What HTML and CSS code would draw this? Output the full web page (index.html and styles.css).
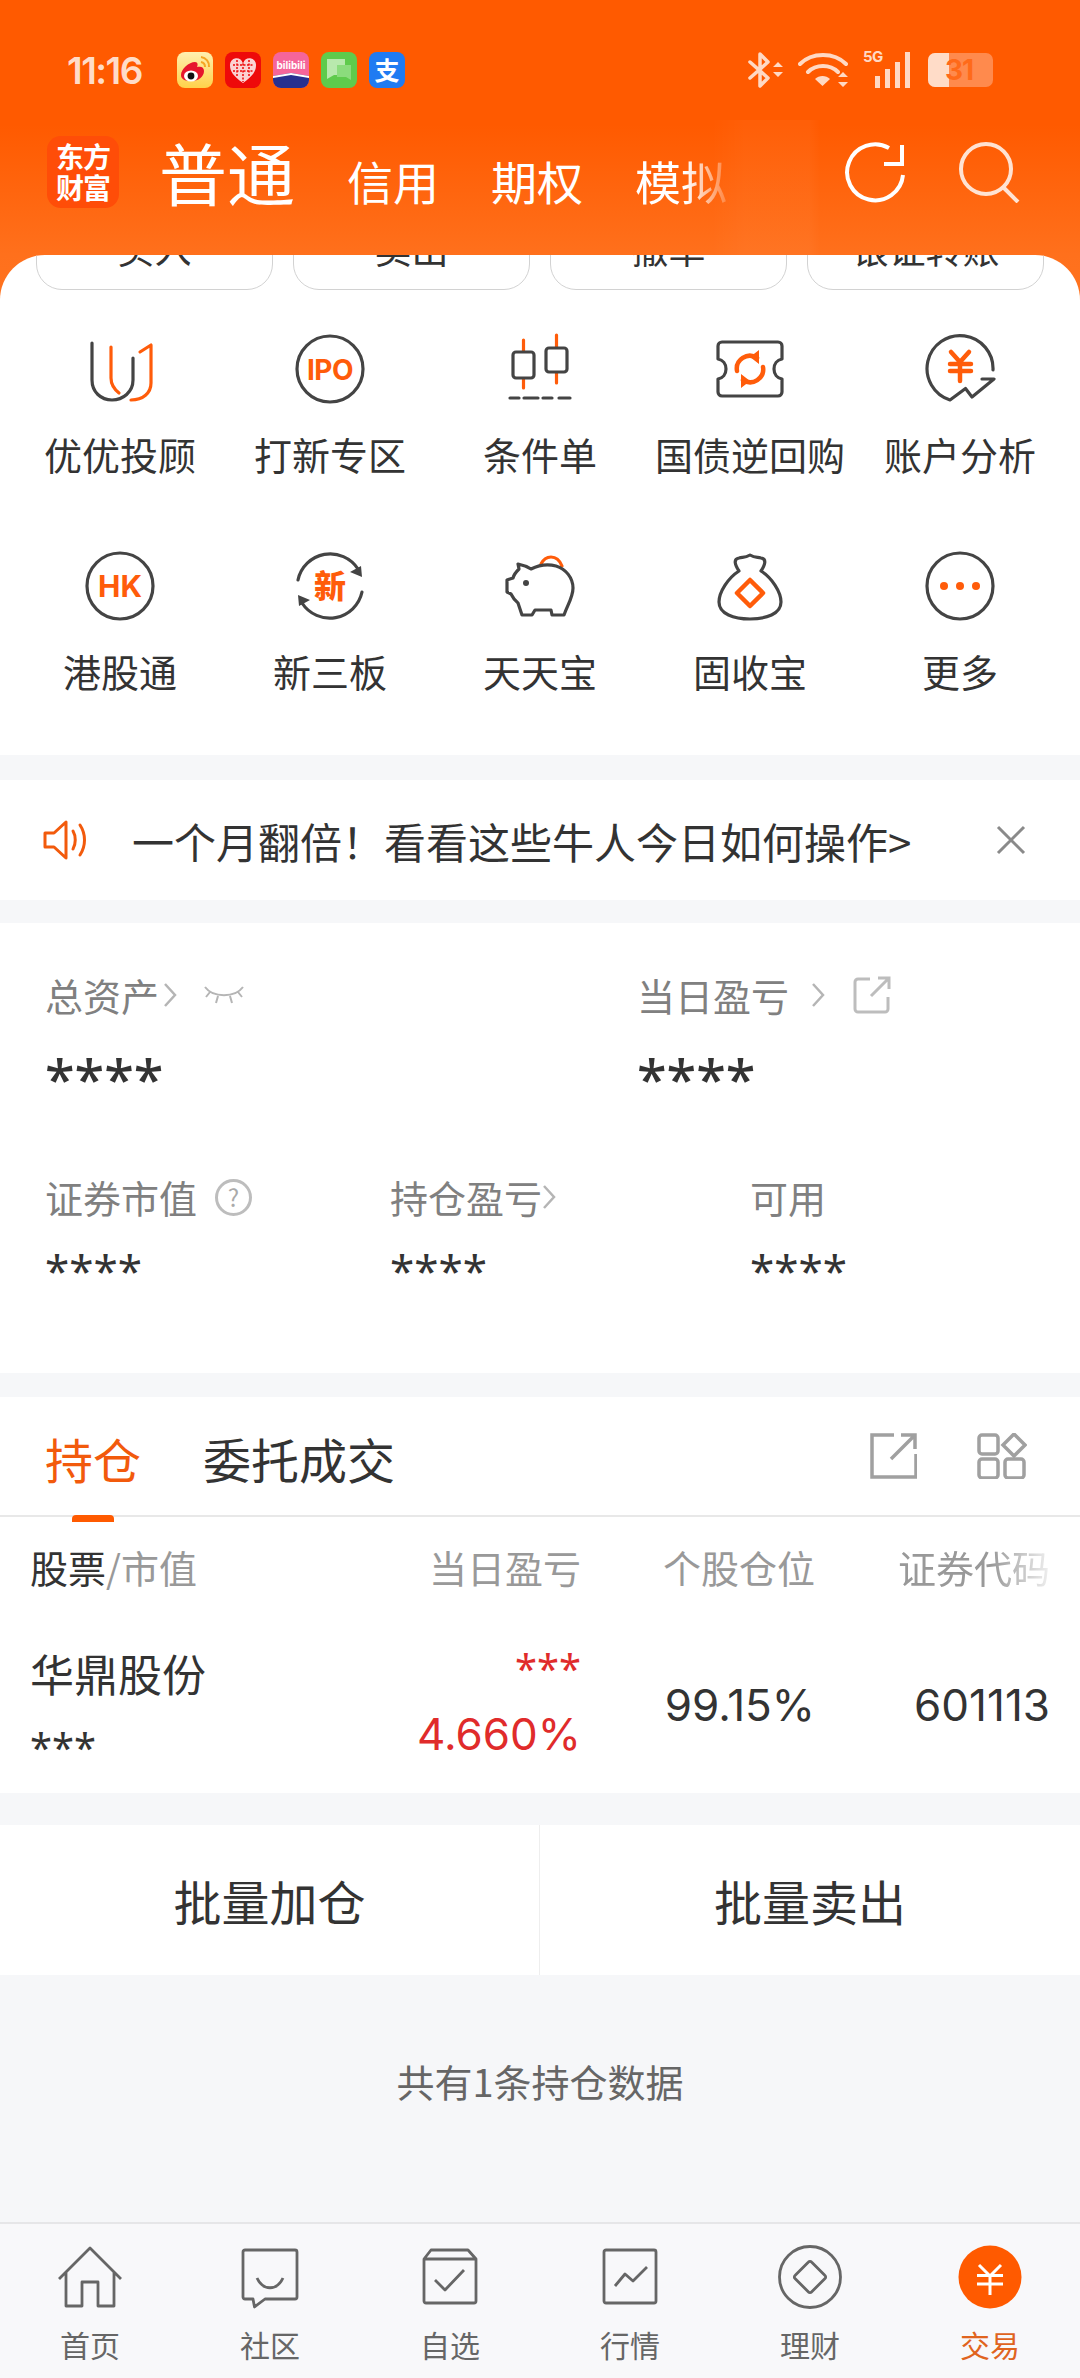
FILE: index.html
```html
<!DOCTYPE html>
<html lang="zh-CN">
<head>
<meta charset="utf-8">
<title>交易</title>
<link rel="stylesheet" href="styles.css">
</head>
<body>
<div class="screen">
  <header class="top">
    <div class="ghost"></div>
    <div class="status">
      <span class="clock">11:16</span>
      <div class="apps">
        <svg class="app" viewBox="0 0 36 36"><defs><linearGradient id="wb" x1="0" y1="0" x2="0" y2="1"><stop offset="0" stop-color="#fff0b0"/><stop offset="1" stop-color="#ffd24a"/></linearGradient></defs><rect width="36" height="36" rx="8" fill="url(#wb)"/><path d="M4 23c0-6 8-13 14-13 3 0 3 3 2 5 4-1 7 0 7 4 0 6-6 10-12 10S4 28 4 23z" fill="#e6162d"/><ellipse cx="14" cy="24" rx="7" ry="5.5" fill="#fff"/><circle cx="14" cy="24" r="3.4" fill="#111"/><path d="M24 5a9 9 0 0 1 8 10M24 10a5 5 0 0 1 4 5" fill="none" stroke="#f5a623" stroke-width="2"/></svg>
        <svg class="app" viewBox="0 0 36 36"><rect width="36" height="36" rx="8" fill="#ee0a0a"/><path d="M18 31C8 24 5 19 5 13.500a6.500 6.500 0 0 1 13-1.500 6.500 6.500 0 0 1 13 1.500C31 19 28 24 18 31z" fill="#fbd3d3"/><path d="M18 8v22M8 13h20M8 19h20M12 8v17M24 8v17" stroke="#ee0a0a" stroke-width="1.500" stroke-dasharray="2 1.500"/></svg>
        <svg class="app" viewBox="0 0 36 36"><rect width="36" height="36" rx="8" fill="#f5659a"/><path d="M0 24l18-3 18 3v4a8 8 0 0 1-8 8H8a8 8 0 0 1-8-8z" fill="#27308f"/><path d="M0 24l18-3 18 3v2L18 23 0 26z" fill="#fff"/><text class="app-bili" x="18" y="17" text-anchor="middle">bilibili</text></svg>
        <svg class="app" viewBox="0 0 36 36"><rect width="36" height="36" rx="8" fill="#5fcb4c"/><path d="M6 7h18v16H13l-7 4z" fill="#b8e9ad"/><path d="M16 13h14v15l-5-3h-9z" fill="#8bdc7c"/></svg>
        <svg class="app" viewBox="0 0 36 36"><rect width="36" height="36" rx="8" fill="#1f7bf2"/><text class="app-ali" x="18" y="28" text-anchor="middle">支</text></svg>
      </div>
      <div class="sys">
        <svg class="sys-bt" viewBox="0 0 36 38"><path d="M3 11l18 16-8 8V3l8 8L3 27" fill="none" stroke="#ffd9c4" stroke-width="3.500" stroke-linejoin="round" stroke-linecap="round"/><path d="M31 11l5 5H26zM31 26l5-5H26z" fill="#ffd9c4"/></svg>
        <svg class="sys-wifi" viewBox="0 0 50 36"><path d="M2 12C14 0 36 0 48 12M10 20c8-8 22-8 30 0" fill="none" stroke="#ffd9c4" stroke-width="4" stroke-linecap="round"/><path d="M17 27c4-4 11-4 15 0l-7.500 7z" fill="#ffd9c4"/><path d="M45 20l5 5H40zM45 35l5-5H40z" fill="#ffd9c4"/></svg>
        <div class="sys-signal">
          <span class="sys-5g">5G</span>
          <svg viewBox="0 0 37 36"><path d="M2 24h5v12H2zM12 17h5v19h-5zM22 10h5v26h-5zM32 0h5v36h-5z" fill="#ffd9c4"/></svg>
        </div>
        <div class="battery">
          <span class="battery-fill"></span>
          <span class="battery-num">31</span>
        </div>
      </div>
    </div>
    <nav class="acct">
      <div class="brand"><span>东方</span><span>财富</span></div>
      <span class="acct-main">普通</span>
      <span class="acct-tab">信用</span>
      <span class="acct-tab">期权</span>
      <span class="acct-tab acct-tab-fade">模拟</span>
      <div class="acct-tools">
        <svg class="tool" viewBox="0 0 62 62"><path d="M59 34A28 28 0 1 1 45 7" fill="none" stroke="#fff" stroke-width="4"/><path d="M58 4v19H40" fill="none" stroke="#fff" stroke-width="4"/></svg>
        <svg class="tool tool-soft" viewBox="0 0 62 62"><circle cx="28" cy="28" r="25" fill="none" stroke="#fff" stroke-width="4"/><path d="M46 47l14 14" stroke="#fff" stroke-width="4"/></svg>
      </div>
    </nav>
  </header>

  <section class="panel">
    <div class="quick">
      <span class="quick-btn">买入</span>
      <span class="quick-btn">卖出</span>
      <span class="quick-btn">撤单</span>
      <span class="quick-btn">银证转账</span>
    </div>
    <div class="tools">
      <a class="tool-cell">
        <svg viewBox="0 0 72 72"><path class="ln" d="M8 10v37c0 12 9 20 20 20s21-8 21-20V25"/><path class="or" d="M27 14v31c0 6 3 11 8 15M56 19l11-7v38c0 10-8 17-20 17"/></svg>
        <span>优优投顾</span>
      </a>
      <a class="tool-cell">
        <svg viewBox="0 0 72 72"><circle class="ln" cx="36" cy="36" r="33"/><text class="glyph glyph-ipo" x="36" y="47" text-anchor="middle">IPO</text></svg>
        <span>打新专区</span>
      </a>
      <a class="tool-cell">
        <svg viewBox="0 0 72 72"><path class="or" d="M19.500 7v48M52.500 2v48"/><rect class="ln fill" x="9" y="19" width="21" height="26" rx="3"/><rect class="ln fill" x="42" y="15" width="21" height="24" rx="3"/><path class="ln" d="M6 65h9M20 65h14M39 65h9M55 65h11"/></svg>
        <span>条件单</span>
      </a>
      <a class="tool-cell">
        <svg viewBox="0 0 72 72"><path class="ln" d="M8 9h56a4 4 0 0 1 4 4v13c-5 1-8 5-8 10s3 9 8 10v13a4 4 0 0 1-4 4H8a4 4 0 0 1-4-4V46c5-1 8-5 8-10s-3-9-8-10V13a4 4 0 0 1 4-4z"/><path class="or-b" d="M23 38a13 13 0 0 1 20-13M49 34a13 13 0 0 1-20 13"/><path class="or-f" d="M45 17v14l-9-7zM27 55V41l9 7z"/></svg>
        <span>国债逆回购</span>
      </a>
      <a class="tool-cell">
        <svg viewBox="0 0 72 72"><path class="ln" d="M69 37A33 33 0 1 0 26 67L41.500 55.500 48 64 70 46H58"/><path class="or-b" d="M27 19l9 10 9-10M26 31h21M26 38h21M36 29v19"/></svg>
        <span>账户分析</span>
      </a>
      <a class="tool-cell">
        <svg viewBox="0 0 72 72"><circle class="ln" cx="36" cy="36" r="33"/><text class="glyph glyph-hk" x="36" y="47" text-anchor="middle">HK</text></svg>
        <span>港股通</span>
      </a>
      <a class="tool-cell">
        <svg viewBox="0 0 72 72"><path class="ln" d="M4 30A33 33 0 0 1 64 19M68 42A33 33 0 0 1 8 53"/><path class="ln-f" d="M68 27l-12-5 11-6zM4 45l12 5-11 6z"/><text class="glyph glyph-xin" x="36" y="48" text-anchor="middle">新</text></svg>
        <span>新三板</span>
      </a>
      <a class="tool-cell">
        <svg viewBox="0 0 72 72"><path class="or" d="M37 14c2-4 6-7 10-7 5 0 9 4 11 9"/><path class="ln" d="M14 14c5 1 10 3 13 5 8-4 17-5 25-3 10 3 17 12 17 22 0 9-5 16-9 27H48l-1-5H31l-3 5H18l-4-12c-4-3-6-7-7-9l-4-2V30l6-2c1-4 4-7 6-9z"/><circle class="ln-f" cx="22" cy="33" r="3"/></svg>
        <span>天天宝</span>
      </a>
      <a class="tool-cell">
        <svg viewBox="0 0 72 72"><path class="ln" d="M25 21c-4-6-6-12 0-13 4-1 6 0 11-3 5 3 7 2 11 3 6 1 4 7 0 13 11 7 20 21 20 31 0 12-15 17-31 17S5 64 5 52c0-10 9-24 20-31z"/><path class="or-b" d="M36 30l13 13-13 13-13-13z"/></svg>
        <span>固收宝</span>
      </a>
      <a class="tool-cell">
        <svg viewBox="0 0 72 72"><circle class="ln" cx="36" cy="36" r="33"/><circle class="or-f" cx="20" cy="36" r="4"/><circle class="or-f" cx="36" cy="36" r="4"/><circle class="or-f" cx="52" cy="36" r="4"/></svg>
        <span>更多</span>
      </a>
    </div>
  </section>

  <section class="notice">
    <svg class="notice-icon" viewBox="0 0 46 42"><path d="M2 14h9L23 3v36L11 28H2z" fill="none" stroke="#f25a0c" stroke-width="3" stroke-linejoin="round"/><path d="M30 12c3 5 3 13 0 18M37 6c6 9 6 21 0 30" fill="none" stroke="#f25a0c" stroke-width="3" stroke-linecap="round"/></svg>
    <span class="notice-text">一个月翻倍！看看这些牛人今日如何操作&gt;</span>
    <svg class="notice-close" viewBox="0 0 32 32"><path d="M3 3l26 26M29 3L3 29" stroke="#8a8a8a" stroke-width="3"/></svg>
  </section>

  <section class="assets">
    <div class="assets-top">
      <div class="stat">
        <div class="stat-label">总资产
          <svg class="chev" viewBox="0 0 14 26"><path d="M2 2l10 11L2 24"/></svg>
          <svg class="eye" viewBox="0 0 40 22"><path d="M1 3c8 11 30 11 38 0M6 8L2 13M14 12l-2 7M26 12l2 7M34 8l4 5"/></svg>
        </div>
        <div class="stat-big">****</div>
      </div>
      <div class="stat">
        <div class="stat-label">当日盈亏
          <svg class="chev chev-wide" viewBox="0 0 14 26"><path d="M2 2l10 11L2 24"/></svg>
          <svg class="share-sm" viewBox="0 0 38 38"><path d="M17 3H5a3 3 0 0 0-3 3v27a3 3 0 0 0 3 3h27a3 3 0 0 0 3-3V21M18 20L36 2M25 2h11v11"/></svg>
        </div>
        <div class="stat-big">****</div>
      </div>
    </div>
    <div class="assets-bottom">
      <div class="stat">
        <div class="stat-label">证券市值
          <span class="hint">?</span>
        </div>
        <div class="stat-small">****</div>
      </div>
      <div class="stat">
        <div class="stat-label">持仓盈亏
          <svg class="chev chev-tight" viewBox="0 0 14 26"><path d="M2 2l10 11L2 24"/></svg>
        </div>
        <div class="stat-small">****</div>
      </div>
      <div class="stat">
        <div class="stat-label">可用</div>
        <div class="stat-small">****</div>
      </div>
    </div>
  </section>

  <section class="hold">
    <div class="hold-tabs">
      <span class="hold-tab hold-tab-on">持仓</span>
      <span class="hold-tab">委托成交</span>
      <div class="hold-tools">
        <svg class="hold-share" viewBox="0 0 47 46"><path d="M24 2H2v42h44V21M21 26L45 2M31 2h14v14"/></svg>
        <svg class="hold-grid" viewBox="0 0 50 46"><rect x="2" y="2" width="19" height="19" rx="3"/><path d="M37 1l11 11-11 11-11-11z"/><rect x="2" y="26" width="19" height="19" rx="3"/><rect x="28" y="26" width="19" height="19" rx="3"/></svg>
      </div>
    </div>
    <div class="table-head">
      <span><b>股票</b>/市值</span>
      <span class="num">当日盈亏</span>
      <span class="num">个股仓位</span>
      <span class="num cut">证券代码</span>
    </div>
    <div class="table-row">
      <div class="cell-name">
        <span class="name">华鼎股份</span>
        <span class="stars">***</span>
      </div>
      <div class="cell-pl">
        <span class="stars stars-up">***</span>
        <span class="pct">4.660%</span>
      </div>
      <span class="cell-val">99.15%</span>
      <span class="cell-val">601113</span>
    </div>
  </section>

  <section class="batch">
    <span class="batch-btn">批量加仓</span>
    <span class="batch-btn">批量卖出</span>
  </section>

  <p class="count">共有1条持仓数据</p>

  <nav class="tabbar">
    <a class="tabbar-item">
      <svg viewBox="0 0 64 64"><path d="M1 34L32 3l31 31M8 27v34h16V37h16v24h16V27"/></svg>
      <span>首页</span>
    </a>
    <a class="tabbar-item">
      <svg viewBox="0 0 64 64"><path d="M7 5h50a2 2 0 0 1 2 2v45a2 2 0 0 1-2 2H27L16.500 62 15 54H7a2 2 0 0 1-2-2V7a2 2 0 0 1 2-2zM19 33c6 13 20 13 26 0"/></svg>
      <span>社区</span>
    </a>
    <a class="tabbar-item">
      <svg viewBox="0 0 64 64"><path d="M6 14l7-9h37l8 9v42a2 2 0 0 1-2 2H8a2 2 0 0 1-2-2zM6 14h52M17 35l10 10 19-20"/></svg>
      <span>自选</span>
    </a>
    <a class="tabbar-item">
      <svg viewBox="0 0 64 64"><path d="M8 5h48a2 2 0 0 1 2 2v49a2 2 0 0 1-2 2H8a2 2 0 0 1-2-2V7a2 2 0 0 1 2-2zM17 41l10-12 8 7 14-14"/></svg>
      <span>行情</span>
    </a>
    <a class="tabbar-item">
      <svg viewBox="0 0 64 64"><circle cx="32" cy="32" r="30.500"/><path d="M30.500 17a2 2 0 0 1 3 0l13.500 13.500a2 2 0 0 1 0 3L33.500 47a2 2 0 0 1-3 0L17 33.500a2 2 0 0 1 0-3z"/></svg>
      <span>理财</span>
    </a>
    <a class="tabbar-item tabbar-on">
      <svg viewBox="0 0 64 64"><circle class="coin" cx="32" cy="32" r="31.500"/><path class="coin-mark" d="M21 20l11 11 11-11M19 30.500h26M19 39h26M32 31v19"/></svg>
      <span>交易</span>
    </a>
  </nav>
</div>
</body>
</html>
```
FILE: styles.css
```css
* { box-sizing: border-box; }

html, body { margin: 0; padding: 0; }

body {
  font-family: "Noto Sans CJK SC", "Noto Sans", sans-serif;
  color: #333;
  background: #f6f7f9;
}

svg { display: block; }

.screen {
  width: 1080px;
  height: 2378px;
  display: flex;
  flex-direction: column;
  overflow: hidden;
  background: #f6f7f9;
}

/* Orange header */
.top {
  position: relative;
  height: 300px;
  flex: none;
  background: linear-gradient(180deg, #ff5a00 0, #ff5a00 125px, #ff701c 255px, #ff731f 300px);
}

.ghost {
  position: absolute;
  left: 712px;
  top: 120px;
  width: 108px;
  height: 135px;
  background: linear-gradient(90deg, rgba(255, 255, 255, 0), rgba(255, 255, 255, .03) 30%, rgba(255, 255, 255, .03) 90%, rgba(255, 255, 255, 0));
}

.status {
  display: flex;
  align-items: center;
  height: 36px;
  margin-top: 0;
  padding: 0 87px 0 67px;
  position: relative;
  top: 52px;
}

.clock {
  font-family: Inter, sans-serif;
  font-weight: 600;
  font-size: 37px;
  letter-spacing: -1.500px;
  color: #ffdcc8;
  width: 110px;
}

.apps { display: flex; gap: 12px; }
.app { width: 36px; height: 36px; }

.app-bili { font-family: Inter, sans-serif; font-size: 10px; font-weight: 700; fill: #fff; }
.app-ali { font-family: "Noto Sans CJK SC", sans-serif; font-size: 25px; font-weight: 700; fill: #fff; }

.sys { margin-left: auto; display: flex; align-items: center; }
.sys-bt { width: 36px; height: 38px; }
.sys-wifi { width: 50px; height: 36px; margin-left: 15px; }

.sys-signal { position: relative; margin-left: 25px; width: 37px; height: 36px; }
.sys-signal svg { width: 37px; height: 36px; }
.sys-5g {
  position: absolute;
  left: -10px;
  top: -4px;
  font-family: Inter, sans-serif;
  font-size: 15px;
  line-height: 18px;
  font-weight: 700;
  letter-spacing: -.5px;
  color: #ffd9c4;
}

.battery {
  position: relative;
  width: 65px;
  height: 34px;
  margin-left: 18px;
  border-radius: 7px;
  background: #ff8a4d;
}
.battery-fill {
  position: absolute;
  left: 0;
  top: 0;
  bottom: 0;
  width: 21px;
  border-radius: 7px 0 0 7px;
  background: #ffdcc8;
}
.battery-num {
  position: absolute;
  left: 17px;
  top: 0;
  font-family: Inter, sans-serif;
  font-size: 28px;
  line-height: 34px;
  font-weight: 700;
  letter-spacing: -1px;
  color: #ff6a1a;
}

.acct {
  position: relative;
  top: 100px;
  display: flex;
  align-items: flex-end;
  height: 72px;
  padding-left: 47px;
  color: #fff;
}

.brand {
  width: 72px;
  height: 72px;
  border-radius: 14px;
  background: #ff4d08;
  display: flex;
  flex-direction: column;
  align-items: center;
  justify-content: center;
  color: #fff;
  font-size: 28px;
  line-height: 31px;
  font-weight: 700;
  letter-spacing: -1px;
}

.acct-main {
  font-size: 68px;
  line-height: 72px;
  margin-left: 40px;
  letter-spacing: 0;
}

.acct-tab {
  font-size: 46px;
  line-height: 52px;
  margin-left: 52px;
  letter-spacing: 0;
  width: 92px;
  white-space: nowrap;
  position: relative;
  top: -2px;
}
.acct-tab:nth-of-type(3) { margin-left: 52px; }
.acct-tab-fade {
  -webkit-mask-image: linear-gradient(90deg, #000 55%, rgba(0, 0, 0, .2) 100%);
  mask-image: linear-gradient(90deg, #000 55%, rgba(0, 0, 0, .2) 100%);
}

.acct-tools {
  margin-left: auto;
  padding-right: 60px;
  display: flex;
  gap: 52px;
  align-self: center;
}
.tool { width: 62px; height: 62px; }
.tool-soft { opacity: .82; }

/* White function panel */
.panel {
  margin-top: -45px;
  position: relative;
  flex: none;
  height: 500px;
  background: #fff;
  border-radius: 45px 45px 0 0;
  overflow: hidden;
}

.quick {
  display: flex;
  justify-content: space-between;
  padding: 0 36px;
  margin-top: -49px;
}

.quick-btn {
  width: 237px;
  height: 84px;
  display: flex;
  align-items: center;
  justify-content: center;
  font-size: 37px;
  border: 1.500px solid #d2d2d2;
  border-radius: 26px;
  color: #333;
}

.tools {
  display: grid;
  grid-template-columns: repeat(5, 210px);
  row-gap: 71px;
  padding: 43px 15px 0;
}

.tool-cell {
  display: flex;
  flex-direction: column;
  align-items: center;
  gap: 24px;
  font-size: 38px;
  line-height: 50px;
  color: #333;
  white-space: nowrap;
}
.tool-cell svg { width: 72px; height: 72px; }

.ln, .or, .or-b {
  fill: none;
  stroke-width: 3.200;
  stroke-linecap: round;
  stroke-linejoin: round;
}
.ln { stroke: #444; }
.ln.fill { fill: #fff; }
.or { stroke: #ff5c0a; }
.or-b { stroke: #ff5c0a; stroke-width: 4.500; }
.or-f { fill: #ff5c0a; }
.ln-f { fill: #444; }

.glyph { fill: #ff5c0a; font-weight: 700; }
.glyph-ipo { font-family: Inter, sans-serif; font-size: 28px; letter-spacing: -.5px; }
.glyph-hk { font-family: Inter, sans-serif; font-size: 30px; }
.glyph-xin { font-family: "Noto Sans CJK SC", sans-serif; font-size: 32px; font-weight: 900; }

/* Announcement */
.notice {
  flex: none;
  margin-top: 25px;
  height: 120px;
  background: #fff;
  display: flex;
  align-items: center;
  padding-left: 43px;
}
.notice-icon { width: 46px; height: 42px; }
.notice-text { margin-left: 43px; font-size: 42px; color: #333; white-space: nowrap; }
.notice-close { width: 32px; height: 32px; margin-left: 84px; }

/* Account figures */
.assets {
  flex: none;
  margin-top: 23px;
  height: 450px;
  background: #fff;
  padding: 47px 0 0 45px;
}
.assets-top { display: grid; grid-template-columns: 592px 1fr; }
.assets-bottom { display: grid; grid-template-columns: 345px 360px 1fr; margin-top: 62px; }

.stat-label {
  display: flex;
  align-items: center;
  font-size: 38px;
  line-height: 50px;
  color: #808080;
  white-space: nowrap;
}

.chev { width: 14px; height: 26px; margin-left: 4px; }
.chev-wide { margin-left: 22px; }
.chev-tight { margin-left: 0; }
.chev path { fill: none; stroke: #b5b5b5; stroke-width: 2.500; }

.eye { width: 40px; height: 22px; margin-left: 27px; }
.eye path { fill: none; stroke: #b5b5b5; stroke-width: 2; }

.share-sm { width: 38px; height: 38px; margin-left: 28px; }
.share-sm path { fill: none; stroke: #bdbdbd; stroke-width: 3; }

.hint {
  width: 37px;
  height: 37px;
  margin-left: 18px;
  border: 3px solid #bdbdbd;
  border-radius: 50%;
  display: flex;
  align-items: center;
  justify-content: center;
  font-size: 24px;
  line-height: 1;
  color: #aaa;
}

.stat-big {
  font-family: "Noto Sans", sans-serif;
  font-size: 54px;
  line-height: 64px;
  font-weight: 500;
  color: #333;
  margin-top: 26px;
}

.stat-small {
  font-family: "Noto Sans", sans-serif;
  font-size: 44px;
  line-height: 52px;
  color: #333;
  margin-top: 22px;
}

/* Holdings */
.hold {
  flex: none;
  margin-top: 24px;
  height: 396px;
  background: #fff;
}

.hold-tabs {
  display: flex;
  align-items: center;
  gap: 62px;
  height: 120px;
  padding: 0 53px 0 45px;
  border-bottom: 2px solid #e8e8e8;
}
.hold-tab { position: relative; font-size: 48px; line-height: 60px; color: #333; top: 2px; }
.hold-tab-on { color: #f25a0c; }
.hold-tab-on::after {
  content: "";
  position: absolute;
  left: 27px;
  width: 42px;
  height: 7px;
  bottom: -34px;
  border-radius: 4px 4px 0 0;
  background: #ff5a00;
}

.hold-tools { margin-left: auto; display: flex; gap: 60px; align-items: center; }
.hold-share { width: 47px; height: 46px; }
.hold-grid { width: 50px; height: 46px; }
.hold-share path, .hold-grid rect, .hold-grid path { fill: none; stroke: #a0a0a0; stroke-width: 3.500; }

.table-head, .table-row {
  display: grid;
  grid-template-columns: 341px 210px 234px 235px;
  padding: 0 30px;
}

.table-head {
  height: 100px;
  align-items: center;
  font-size: 38px;
  line-height: 50px;
  color: #999;
}
.table-head b { font-weight: 400; color: #333; }
.num { text-align: right; }
.cut {
  -webkit-mask-image: linear-gradient(90deg, #000 75%, rgba(0, 0, 0, .15) 100%);
  mask-image: linear-gradient(90deg, #000 75%, rgba(0, 0, 0, .15) 100%);
}

.table-row { height: 176px; align-items: center; }
.cell-name, .cell-pl { display: flex; flex-direction: column; }
.cell-pl { align-items: flex-end; }
.name { font-size: 44px; line-height: 60px; color: #333; }
.stars {
  font-family: "Noto Sans", sans-serif;
  font-size: 40px;
  line-height: 40px;
  color: #333;
  margin-top: 24px;
}
.stars-up { color: #e02b2b; margin-top: 0; }
.pct {
  font-family: Inter, sans-serif;
  font-size: 44px;
  line-height: 56px;
  color: #e02b2b;
  margin-top: 18px;
}
.cell-val {
  font-family: Inter, sans-serif;
  font-size: 44px;
  line-height: 56px;
  color: #333;
  text-align: right;
}

/* Bulk actions */
.batch {
  flex: none;
  margin-top: 32px;
  height: 150px;
  display: grid;
  grid-template-columns: 1fr 1fr;
  background: #fff;
}
.batch-btn {
  display: flex;
  align-items: center;
  justify-content: center;
  font-size: 48px;
  color: #333;
}
.batch-btn:first-child { border-right: 1px solid #eee; }

.count {
  flex: none;
  margin: 80px 0 0;
  text-align: center;
  font-size: 38px;
  line-height: 52px;
  color: #666;
}

/* Bottom navigation */
.tabbar {
  margin-top: auto;
  height: 156px;
  flex: none;
  display: grid;
  grid-template-columns: repeat(6, 180px);
  border-top: 2px solid #e6e6e8;
  background: #f8f8fa;
}

.tabbar-item {
  display: flex;
  flex-direction: column;
  align-items: center;
  padding-top: 21px;
  font-size: 30px;
  line-height: 40px;
  color: #666;
}
.tabbar-item svg { width: 64px; height: 64px; margin-bottom: 15px; }
.tabbar-item svg path, .tabbar-item svg circle {
  fill: none;
  stroke: #666;
  stroke-width: 2.800;
  stroke-linejoin: round;
}
.tabbar-on { color: #e0641e; }
.tabbar-item svg .coin { fill: #ff5a00; stroke: none; }
.tabbar-item svg .coin-mark { stroke: #fff; stroke-width: 3; }
```
